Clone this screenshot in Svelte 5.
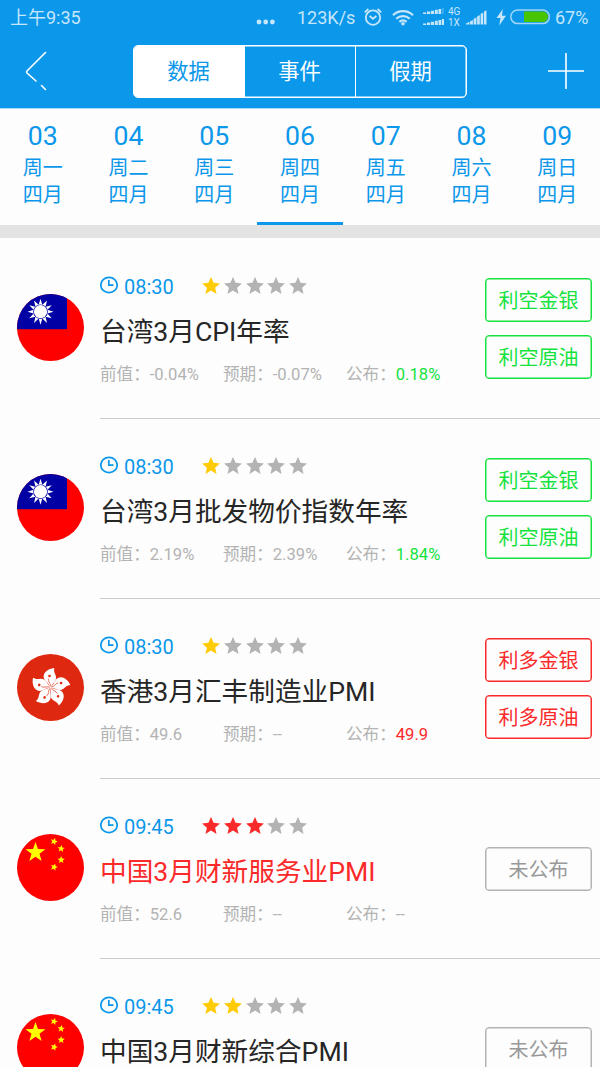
<script lang="ts">
  type Flag = 'tw' | 'hk' | 'cn';
  type Tone = 'green' | 'red' | 'gray';

  interface CalendarItem {
    flag: Flag;
    time: string;
    stars: number;
    title: string;
    values?: { previous: string; forecast: string; actual: string };
    tone: Tone;
    tags: string[];
  }

  const tabs = ['数据', '事件', '假期'];
  let activeTab = $state(0);

  const days = [
    { date: '03', week: '周一' },
    { date: '04', week: '周二' },
    { date: '05', week: '周三' },
    { date: '06', week: '周四' },
    { date: '07', week: '周五' },
    { date: '08', week: '周六' },
    { date: '09', week: '周日' },
  ];
  let activeDay = $state(3);

  const items: CalendarItem[] = [
    {
      flag: 'tw',
      time: '08:30',
      stars: 1,
      title: '台湾3月CPI年率',
      values: { previous: '-0.04%', forecast: '-0.07%', actual: '0.18%' },
      tone: 'green',
      tags: ['利空金银', '利空原油'],
    },
    {
      flag: 'tw',
      time: '08:30',
      stars: 1,
      title: '台湾3月批发物价指数年率',
      values: { previous: '2.19%', forecast: '2.39%', actual: '1.84%' },
      tone: 'green',
      tags: ['利空金银', '利空原油'],
    },
    {
      flag: 'hk',
      time: '08:30',
      stars: 1,
      title: '香港3月汇丰制造业PMI',
      values: { previous: '49.6', forecast: '--', actual: '49.9' },
      tone: 'red',
      tags: ['利多金银', '利多原油'],
    },
    {
      flag: 'cn',
      time: '09:45',
      stars: 3,
      title: '中国3月财新服务业PMI',
      values: { previous: '52.6', forecast: '--', actual: '--' },
      tone: 'gray',
      tags: ['未公布'],
    },
    { flag: 'cn', time: '09:45', stars: 2, title: '中国3月财新综合PMI', tone: 'gray', tags: ['未公布'] },
  ];

  function starPoints(cx: number, cy: number, r: number, inner = 0.4, tips = 5, turn = 0): string {
    const points: string[] = [];
    for (let i = 0; i < tips * 2; i++) {
      const radius = i % 2 ? r * inner : r;
      const angle = (Math.PI * i) / tips - Math.PI / 2 + turn;
      points.push(`${(cx + radius * Math.cos(angle)).toFixed(2)},${(cy + radius * Math.sin(angle)).toFixed(2)}`);
    }
    return points.join(' ');
  }

  const ratingStar = starPoints(9, 9.3, 9.4, 0.46);
  const smallStars = [
    [3.5, -26, 0.3],
    [10.7, -18.8, 0.1],
    [10.7, -7.6, 0],
    [3.6, -0.4, 0.3],
  ];
</script>

<div class="page">
  <header>
    <div class="status">
      <span class="clock">上午9:35</span>
      <svg class="dots" width="20" height="6" viewBox="0 0 20 6">
        <circle cx="3" cy="3" r="2.4" /><circle cx="9.7" cy="3" r="2.4" /><circle cx="16.4" cy="3" r="2.4" />
      </svg>
      <span class="speed">123K/s</span>
      <svg class="alarm line" width="18" height="18" viewBox="0 0 18 18">
        <circle cx="9" cy="9.6" r="7.2" />
        <path d="M5.600 8 9 10.800l3.400-2.800M.8 4.400 4.400 1M17.200 4.400 13.600 1" />
      </svg>
      <svg class="wifi line" width="22" height="17" viewBox="0 0 22 17">
        <path d="M1 6.200a14.500 14.500 0 0 1 20 0M4.200 9.700a10 10 0 0 1 13.600 0M7.400 12.800a5.500 5.500 0 0 1 7.200 0" />
        <circle class="fill" cx="11" cy="14.800" r="1.800" />
      </svg>
      <svg class="dual" width="22" height="18" viewBox="0 0 22 18">
        <path d="M0 4.500h3.200V6H0zM4 3.600h3.200V6H4zM8 2.700h3.200V6H8zM12 1.800h2.800V6H12zM15.500.9h2.600V6h-2.600z" />
        <path opacity=".3" d="M18.800 0h2v6h-2z" />
        <path d="M0 15.500h3.200V17H0zM4 14.600h3.200V17H4zM8 13.700h3.200V17H8zM12 12.800h2.800V17H12zM15.500 11.900h2.600V17h-2.600zM18.800 11H21v6h-2.200z" />
      </svg>
      <span class="network"><span>4G</span><span>1X</span></span>
      <svg class="signal" width="21" height="15" viewBox="0 0 21 15">
        <path d="M0 13.600 3.400 11.800v2.600H0zM4 11.500l2.900-1.600v4.500H4zM7.600 9l2.800-1.700v7.100H7.600zM11.100 6.600l2.700-1.700v9.500h-2.700zM14.600 4.100l2.600-1.700v12h-2.600zM18 1.500 20.500.2v14.200H18z" />
      </svg>
      <svg class="bolt" width="11" height="17" viewBox="0 0 11 17">
        <path d="M6.800 0 .5 9h4L3.200 16.500 10 6.800H6z" />
      </svg>
      <svg class="battery" width="41" height="16" viewBox="0 0 41 16">
        <rect class="shell" x=".8" y="1" width="38.600" height="13.600" rx="6.800" />
        <path class="level" d="M14 2.600h18.800a5.200 5.200 0 0 1 0 10.400H14z" />
      </svg>
      <span class="percent">67%</span>
    </div>

    <nav>
      <button type="button" class="icon-btn" aria-label="返回">
        <svg width="24" height="40" viewBox="0 0 24 40">
          <path d="M21.500 1.500 3 20c-.6.700-.6 1.300 0 2L12 30M17.500 34.500l4 4" />
        </svg>
      </button>
      <div class="tabs">
        {#each tabs as tab, i}
          <button type="button" class:active={i === activeTab} onclick={() => (activeTab = i)}>{tab}</button>
        {/each}
      </div>
      <button type="button" class="icon-btn" aria-label="添加">
        <svg width="36" height="36" viewBox="0 0 36 36">
          <path d="M18 .5v35M.5 18h35" />
        </svg>
      </button>
    </nav>
  </header>

  <div class="days">
    {#each days as day, i}
      <button type="button" class="day" class:active={i === activeDay} onclick={() => (activeDay = i)}>
        <span class="date">{day.date}</span>
        <span>{day.week}</span>
        <span>四月</span>
      </button>
    {/each}
  </div>

  <main>
    {#each items as item}
      <article>
        <div class="flag-cell">
          <svg class="flag {item.flag}" width="67" height="67" viewBox="-33.5 -33.5 67 67">
            {#if item.flag === 'tw'}
              <rect x="-34" y="-34" width="50.500" height="35.700" fill="#0000a4" />
              <polygon points={starPoints(-10, -15.8, 13, 0.55, 12)} fill="#fff" />
              <circle cx="-10" cy="-15.800" r="7.300" fill="#0000a4" />
              <circle cx="-10" cy="-15.800" r="6.600" fill="#fff" />
            {:else if item.flag === 'hk'}
              {#each [0, 72, 144, 216, 288] as angle}
                <g transform="rotate({angle})">
                  <path fill="#fff" d="M.3 0C1.500-4 7-6.500 5.200-12 4.300-14.500 3-16 3.800-19.600-2.500-19-7.500-15-6.800-10-6.200-6-2-5.200-.3 0z" />
                  <path fill="none" stroke="#de2910" stroke-width=".6" d="M0-1C0-5-2.500-5.500-2-9" />
                  <circle cx="-1" cy="-11.500" r="1.300" fill="#de2910" />
                </g>
              {/each}
            {:else}
              <polygon points={starPoints(-15, -15, 10.5)} fill="#ff0" />
              {#each smallStars as [x, y, turn]}
                <polygon points={starPoints(x, y, 3.8, 0.44, 5, turn)} fill="#ff0" />
              {/each}
            {/if}
          </svg>
        </div>

        <div class="content">
          <div class="info">
            <div class="head">
              <svg class="time-icon" width="18" height="18" viewBox="0 0 18 18">
                <ellipse cx="9" cy="9" rx="8.200" ry="7.700" />
                <path d="M8.800 4v5.200h4.700" />
              </svg>
              <span class="time">{item.time}</span>
              <div class="stars" class:hot={item.stars >= 3}>
                {#each Array(5) as _, i}
                  <svg class:on={i < item.stars} width="18" height="19" viewBox="0 0 18 19">
                    <polygon points={ratingStar} />
                  </svg>
                {/each}
              </div>
            </div>
            <h2 class:hot={item.stars >= 3}>{item.title}</h2>
            {#if item.values}
              <div class="values">
                <span>前值：{item.values.previous}</span>
                <span>预期：{item.values.forecast}</span>
                <span>公布：<b class={item.tone}>{item.values.actual}</b></span>
              </div>
            {/if}
          </div>
          <div class="tags">
            {#each item.tags as tag}
              <span class="tag {item.tone}">{tag}</span>
            {/each}
          </div>
        </div>
      </article>
    {/each}
  </main>
</div>

<style>
  :global(body) {
    margin: 0;
    background: #fdfdfd;
  }

  .page {
    display: flex;
    flex-direction: column;
    width: 600px;
    height: 1067px;
    overflow: hidden;
    background: #fdfdfd;
    font-family: Roboto, 'Noto Sans CJK SC', sans-serif;
  }

  button {
    padding: 0;
    border: none;
    background: none;
    font: inherit;
    color: inherit;
  }

  svg {
    display: block;
    flex-shrink: 0;
  }

  header {
    flex-shrink: 0;
    height: 108px;
    background: #0b97ea;
  }

  .status {
    display: flex;
    align-items: center;
    height: 34px;
    padding-left: 10px;
    font-size: 18px;
    line-height: 34px;
    white-space: nowrap;
    color: #c5e6fb;
    fill: #c5e6fb;
  }

  .status > span:not(.network) {
    padding-top: 1px;
  }

  .status .line {
    fill: none;
    stroke: #c5e6fb;
    stroke-width: 1.8;
  }

  .status .fill {
    fill: #c5e6fb;
    stroke: none;
  }

  .clock {
    width: 246px;
  }

  .dots {
    margin-top: 9px;
  }

  .speed {
    width: 58px;
    margin-left: 21px;
  }

  .alarm {
    margin-left: 9px;
  }

  .status .wifi {
    margin-left: 10px;
    stroke-width: 2.2;
  }

  .dual {
    margin-left: 9px;
  }

  .network {
    display: flex;
    flex-direction: column;
    width: 15px;
    margin-left: 3px;
    font-size: 10px;
    line-height: 11px;
  }

  .signal {
    margin-left: 3px;
  }

  .bolt {
    margin-left: 9px;
  }

  .battery {
    margin-left: 3px;
  }

  .shell {
    fill: none;
    stroke: #9ed5f8;
    stroke-width: 1.5;
  }

  .level {
    fill: #48c400;
  }

  .percent {
    margin-left: 4px;
  }

  nav {
    display: flex;
    align-items: center;
    justify-content: space-between;
    height: 54px;
    padding: 10px 16px 0 24px;
  }

  .icon-btn svg {
    fill: none;
    stroke: #fff;
    stroke-width: 1.6;
    stroke-linecap: round;
  }

  nav .icon-btn {
    width: 36px;
  }

  .tabs {
    display: flex;
    box-sizing: border-box;
    width: 334px;
    height: 53px;
    margin-right: 21px;
    margin-left: 12px;
    border: 1.5px solid #fff;
    border-radius: 5px;
    box-shadow: inset 0 0 0 0.5px #fff;
    overflow: hidden;
  }

  .tabs button {
    flex: 1;
    padding-bottom: 3px;
    font-size: 21.33px;
    color: #fff;
  }

  .tabs button + button {
    border-left: 1.5px solid #fff;
  }

  .tabs .active {
    background: #fff;
    color: #0b97ea;
  }

  .days {
    display: grid;
    grid-template-columns: repeat(7, 1fr);
    flex-shrink: 0;
    box-sizing: border-box;
    height: 130px;
    border-top: 1px solid #a5d8f7;
    border-bottom: 13px solid #e3e3e3;
  }

  .day {
    display: flex;
    flex-direction: column;
    align-items: center;
    padding-top: 10px;
    border-bottom: 3px solid transparent;
    font-size: 20px;
    line-height: 27px;
    color: #0b97ea;
  }

  .day.active {
    border-bottom-color: #0b97ea;
  }

  .date {
    margin-bottom: 2px;
    font-size: 26.67px;
    line-height: 34px;
  }

  main {
    padding-top: 1px;
  }

  article {
    display: flex;
    height: 180px;
  }

  .flag-cell {
    display: flex;
    align-items: center;
    width: 100px;
    padding: 0 0 3px 16.5px;
    box-sizing: border-box;
  }

  .flag {
    border-radius: 50%;
    background: #f00;
  }

  .flag.hk {
    background: #de2910;
  }

  .content {
    display: flex;
    flex: 1;
    box-sizing: border-box;
    padding-right: 8px;
    border-bottom: 1px solid #ccc;
  }

  .info {
    flex: 1;
    padding-top: 35px;
  }

  .head {
    display: flex;
    align-items: center;
    height: 24px;
    color: #0b97ea;
  }

  .time-icon {
    margin-top: -2px;
    fill: none;
    stroke: #0b97ea;
    stroke-width: 1.7;
  }

  .time {
    width: 78px;
    margin-left: 6px;
    padding-top: 1px;
    font-size: 20px;
    line-height: 24px;
  }

  .stars {
    display: flex;
    gap: 3.75px;
    fill: #b3b3b3;
  }

  .stars .on {
    fill: #ffcb05;
  }

  .stars.hot .on {
    fill: #fb2a2a;
  }

  h2 {
    margin: 16px 0 14px;
    font-size: 26.67px;
    font-weight: 400;
    line-height: 36px;
    white-space: nowrap;
    color: #262626;
  }

  h2.hot {
    color: #fb2a2a;
  }

  .values {
    display: grid;
    grid-template-columns: 123px 123px 1fr;
    font-size: 16.6px;
    line-height: 22px;
    white-space: nowrap;
    color: #b3b3b3;
  }

  .values b {
    font-weight: 400;
  }

  .tags {
    display: flex;
    flex-direction: column;
    justify-content: center;
    gap: 13px;
    width: 107px;
  }

  .tag {
    box-sizing: border-box;
    height: 44px;
    border: 1.5px solid currentColor;
    border-radius: 4px;
    box-shadow: inset 0 0 0 0.5px currentColor;
    font-size: 20px;
    line-height: 45px;
    text-align: center;
  }

  .green {
    color: #16e23e;
  }

  .red {
    color: #fb2a2a;
  }

  .gray {
    color: #b3b3b3;
  }

  .tag.gray {
    border-color: #b3b3b3;
    box-shadow: inset 0 0 0 0.5px #b3b3b3;
    color: #999;
  }
</style>
